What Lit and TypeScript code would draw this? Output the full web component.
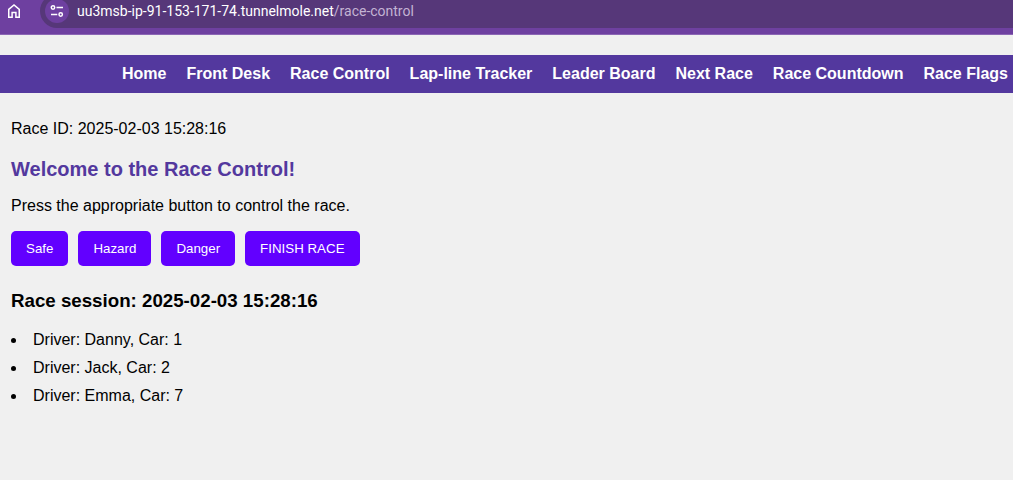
import { LitElement, html, css } from "lit";
import { customElement, state } from "lit/decorators.js";

@customElement("browser-bar")
class BrowserBar extends LitElement {
  static styles = css`
    :host {
      display: block;
    }
    .bar {
      display: flex;
      align-items: flex-end;
      height: 28px;
      padding-bottom: 6px;
      border-bottom: 1px solid #8b66b4;
      background: #6e40a0;
      overflow: hidden;
    }
    .home {
      display: flex;
      width: 28px;
      height: 34px;
      margin-right: 12px;
      padding: 0;
      border: 0;
      background: none;
      align-items: center;
      justify-content: center;
    }
    .address {
      display: flex;
      flex: 1;
      align-items: center;
      box-sizing: border-box;
      height: 34px;
      padding-left: 5px;
      border-radius: 17px 0 0 17px;
      background: #563779;
      font: 14px/20px Roboto, "Noto Sans", sans-serif;
      white-space: nowrap;
    }
    .site {
      display: flex;
      width: 24px;
      height: 24px;
      margin-right: 8px;
      padding: 0;
      border: 0;
      border-radius: 50%;
      background: #6e40a0;
      align-items: center;
      justify-content: center;
    }
    .host {
      color: #fff;
    }
    .path {
      color: #c3b3d3;
    }
  `;

  render() {
    return html`
      <div class="bar">
        <button class="home" aria-label="Home page">
          <svg width="14" height="16" viewBox="0 0 14 16" fill="none" stroke="#fff" stroke-width="1.5">
            <path d="M1.75 6.3 7 2l5.25 4.3v8H8.9V9.4H5.1v4.9H1.75z" />
          </svg>
        </button>
        <div class="address">
          <button class="site" aria-label="View site information">
            <svg width="14" height="14" viewBox="0 0 14 14" fill="none" stroke="#fff" stroke-width="1.5">
              <circle cx="3" cy="3.5" r="1.7" />
              <path d="M6.5 3.5h6.5M1 10.5h6.3" />
              <circle cx="10.7" cy="10.5" r="1.7" />
            </svg>
          </button>
          <span class="host">uu3msb-ip-91-153-171-74.tunnelmole.net</span><span class="path">/race-control</span>
        </div>
      </div>
    `;
  }
}

@customElement("app-root")
class AppRoot extends LitElement {
  static styles = css`
    :host {
      display: block;
      min-height: 100vh;
      background: #f0f0f0;
      color: #000;
      font: 16px/18px "Liberation Sans", Arial, sans-serif;
    }
    .nav {
      display: flex;
      justify-content: flex-end;
      gap: 20px;
      margin-top: 20px;
      padding: 10px 5px;
      background: #53389e;
    }
    .link {
      color: #fff;
      font-weight: bold;
      text-decoration: none;
      white-space: nowrap;
    }
    .content {
      padding: 27px 11px;
    }
    .text {
      margin: 0;
    }
    .title {
      margin: 19px 0 16px;
      color: #53389e;
      font-size: 20px;
      line-height: 24px;
    }
    .actions {
      display: flex;
      gap: 10px;
      margin: 16px 0 24px;
    }
    .action {
      padding: 10px 15px;
      border: 0;
      border-radius: 5px;
      background: #6200ff;
      color: #fff;
      font-family: inherit;
    }
    .session {
      margin: 0 0 14px;
      line-height: 22px;
    }
    .drivers {
      margin: 0;
      padding: 0;
      list-style-position: inside;
    }
    .driver {
      padding: 5px 0;
    }
  `;

  @state() private raceId = "2025-02-03 15:28:16";

  private links = [
    "Home",
    "Front Desk",
    "Race Control",
    "Lap-line Tracker",
    "Leader Board",
    "Next Race",
    "Race Countdown",
    "Race Flags",
  ];

  private actions = ["Safe", "Hazard", "Danger", "FINISH RACE"];

  private drivers = [
    { name: "Danny", car: 1 },
    { name: "Jack", car: 2 },
    { name: "Emma", car: 7 },
  ];

  render() {
    return html`
      <browser-bar></browser-bar>
      <nav class="nav">
        ${this.links.map((label) => html`<a class="link" href="#">${label}</a>`)}
      </nav>
      <main class="content">
        <p class="text">Race ID: ${this.raceId}</p>
        <h2 class="title">Welcome to the Race Control!</h2>
        <p class="text">Press the appropriate button to control the race.</p>
        <div class="actions">
          ${this.actions.map((label) => html`<button class="action">${label}</button>`)}
        </div>
        <h3 class="session">Race session: ${this.raceId}</h3>
        <ul class="drivers">
          ${this.drivers.map((d) => html`<li class="driver">Driver: ${d.name}, Car: ${d.car}</li>`)}
        </ul>
      </main>
    `;
  }
}
